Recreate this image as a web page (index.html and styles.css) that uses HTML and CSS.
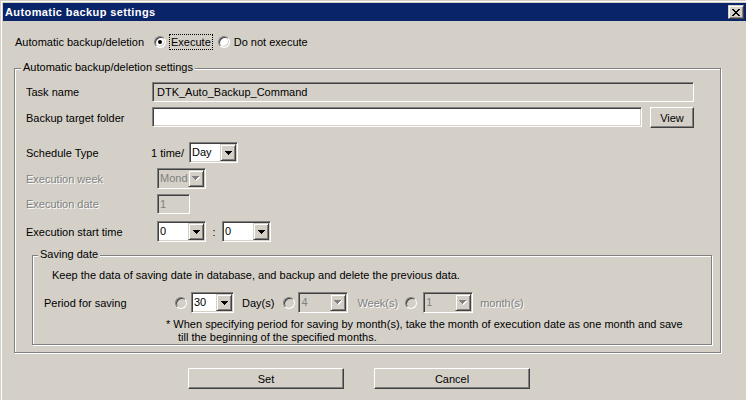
FILE: index.html
```html
<!DOCTYPE html>
<html>
<head>
<meta charset="utf-8">
<link rel="stylesheet" href="styles.css">
</head>
<body>
<div class="frame">
  <div class="titlebar">
    <span class="title">Automatic backup settings</span>
    <span class="close-btn"><svg width="8" height="7" viewBox="0 0 8 7" shape-rendering="crispEdges"><path d="M0 0h2v1h1v1h2v-1h1v-1h2v1h-1v1h-1v1h-1v1h1v1h1v1h1v1h-2v-1h-1v-1h-2v1h-1v1h-2v-1h1v-1h1v-1h1v-1h-1v-1h-1v-1h-1z" fill="#000"/></svg></span>
  </div>
  <div class="content">
    <div class="row-top">
      <span class="lbl-top">Automatic backup/deletion</span>
      <span class="radio checked"></span>
      <span class="focus">Execute</span>
      <span class="radio r-second"></span>
      <span class="opt-text">Do not execute</span>
    </div>

    <div class="group outer">
      <span class="legend">Automatic backup/deletion settings</span>

      <div class="frow r-task">
        <span class="flabel">Task name</span>
        <span class="input ro task">DTK_Auto_Backup_Command</span>
      </div>

      <div class="frow r-folder">
        <span class="flabel">Backup target folder</span>
        <span class="input folder"></span>
        <span class="btn view">View</span>
      </div>

      <div class="frow r-sched">
        <span class="flabel">Schedule Type</span>
        <span class="times">1 time/</span>
        <span class="select w49"><span class="val">Day</span><span class="arrow"><svg width="7" height="4" viewBox="0 0 7 4" shape-rendering="crispEdges"><path d="M0 0h7v1h-1v1h-1v1h-1v1h-1v-1h-1v-1h-1v-1h-1z" fill="#000"/></svg></span></span>
      </div>

      <div class="frow r-week">
        <span class="flabel disabled">Execution week</span>
        <span class="select w49 dis indent"><span class="val">Monday</span><span class="arrow"><svg width="8" height="5" viewBox="0 0 8 5" shape-rendering="crispEdges"><path d="M1 1h7v1h-1v1h-1v1h-1v1h-1v-1h-1v-1h-1v-1h-1z" fill="#fff"/><path d="M0 0h7v1h-1v1h-1v1h-1v1h-1v-1h-1v-1h-1v-1h-1z" fill="#808080"/></svg></span></span>
      </div>

      <div class="frow r-date">
        <span class="flabel disabled">Execution date</span>
        <span class="input ro date indent">1</span>
      </div>

      <div class="frow r-time">
        <span class="flabel">Execution start time</span>
        <span class="select w49 indent"><span class="val">0</span><span class="arrow"><svg width="7" height="4" viewBox="0 0 7 4" shape-rendering="crispEdges"><path d="M0 0h7v1h-1v1h-1v1h-1v1h-1v-1h-1v-1h-1v-1h-1z" fill="#000"/></svg></span></span>
        <span class="colon">:</span>
        <span class="select w49"><span class="val">0</span><span class="arrow"><svg width="7" height="4" viewBox="0 0 7 4" shape-rendering="crispEdges"><path d="M0 0h7v1h-1v1h-1v1h-1v1h-1v-1h-1v-1h-1v-1h-1z" fill="#000"/></svg></span></span>
      </div>

      <div class="group inner">
        <span class="legend">Saving date</span>
        <div class="keep">Keep the data of saving date in database, and backup and delete the previous data.</div>
        <div class="prow">
          <span class="plabel">Period for saving</span>
          <span class="radio grey"></span>
          <span class="select w43 m-s1"><span class="val">30</span><span class="arrow"><svg width="7" height="4" viewBox="0 0 7 4" shape-rendering="crispEdges"><path d="M0 0h7v1h-1v1h-1v1h-1v1h-1v-1h-1v-1h-1v-1h-1z" fill="#000"/></svg></span></span>
          <span class="unit u-day">Day(s)</span>
          <span class="radio grey m-r2"></span>
          <span class="select w50 dis m-s2"><span class="val">4</span><span class="arrow"><svg width="8" height="5" viewBox="0 0 8 5" shape-rendering="crispEdges"><path d="M1 1h7v1h-1v1h-1v1h-1v1h-1v-1h-1v-1h-1v-1h-1z" fill="#fff"/><path d="M0 0h7v1h-1v1h-1v1h-1v1h-1v-1h-1v-1h-1v-1h-1z" fill="#808080"/></svg></span></span>
          <span class="unit disabled u-week">Week(s)</span>
          <span class="radio grey m-r3"></span>
          <span class="select w50 dis m-s3"><span class="val">1</span><span class="arrow"><svg width="8" height="5" viewBox="0 0 8 5" shape-rendering="crispEdges"><path d="M1 1h7v1h-1v1h-1v1h-1v1h-1v-1h-1v-1h-1v-1h-1z" fill="#fff"/><path d="M0 0h7v1h-1v1h-1v1h-1v1h-1v-1h-1v-1h-1v-1h-1z" fill="#808080"/></svg></span></span>
          <span class="unit disabled u-month">month(s)</span>
        </div>
        <div class="note">* When specifying period for saving by month(s), take the month of execution date as one month and save<br>till the beginning of the specified months.</div>
      </div>
    </div>

    <div class="buttons">
      <span class="btn big">Set</span>
      <span class="btn big">Cancel</span>
    </div>
  </div>
</div>
</body>
</html>
```

FILE: styles.css
```css
html, body {
  margin: 0;
  padding: 0;
  background: #d4d0c8;
  overflow: hidden;
}
body {
  width: 746px;
  height: 400px;
  font-family: "Liberation Sans", Arial, sans-serif;
  font-size: 11px;
  letter-spacing: 0;
  color: #000;
}
.frame {
  margin: 1px 0 0 1px;
  border-left: 1px solid #fff;
  border-top: 1px solid #fff;
  padding: 1px 0 0 1px;
  height: 397px;
}
.titlebar {
  height: 18px;
  background: #0a246a;
  display: flex;
  align-items: center;
  justify-content: space-between;
  padding-left: 2px;
  padding-right: 0;
}
.title {
  color: #fff;
  font-weight: bold;
  letter-spacing: 0.4px;
  line-height: 18px;
}
.close-btn {
  width: 16px;
  height: 14px;
  box-sizing: border-box;
  background: #d4d0c8;
  border: 1px solid;
  border-color: #d4d0c8 #404040 #404040 #d4d0c8;
  box-shadow: inset 1px 1px 0 #fff, inset -1px -1px 0 #808080;
  display: flex;
  align-items: center;
  justify-content: center;
  margin-right: 2px;
}
.close-btn svg { display: block; }

.content {
  display: flex;
  flex-direction: column;
  align-items: flex-start;
}

.row-top {
  margin-top: 11px;
  height: 20px;
  padding-left: 12px;
  display: flex;
  align-items: center;
}
.lbl-top { width: 139px; }
.radio {
  width: 12px;
  height: 12px;
  box-sizing: border-box;
  border-radius: 50%;
  background: #fff;
  border: 1px solid;
  border-color: #808080 #fff #fff #808080;
  box-shadow: inset 1px 1px 0 #404040, inset -1px -1px 0 #d4d0c8;
  display: flex;
  align-items: center;
  justify-content: center;
  flex-shrink: 0;
}
.radio.checked::after {
  content: "";
  width: 4px;
  height: 4px;
  border-radius: 50%;
  background: #000;
}
.radio.grey { background: #d4d0c8; }
.focus {
  margin-left: 3px;
  border: 1px dotted #000;
  padding: 0 1px;
  line-height: 14px;
}
.r-second { margin-left: 5px; }
.opt-text { margin-left: 4px; }

.group {
  position: relative;
  box-sizing: border-box;
  border: 1px solid #808080;
  box-shadow: inset 1px 1px 0 #fff, 1px 1px 0 #fff;
}
.group .legend {
  position: absolute;
  top: -8px;
  background: #d4d0c8;
  padding: 0 2px;
  line-height: 13px;
  white-space: nowrap;
}
.outer {
  margin-left: 11px;
  margin-top: 16px;
  width: 707px;
  padding: 13px 0 7px 11px;
}
.outer > .legend { left: 6px; }

.frow {
  display: flex;
  align-items: flex-start;
}
.flabel {
  width: 126px;
  flex-shrink: 0;
  align-self: center;
}
.disabled {
  color: #808080;
  text-shadow: 1px 1px 0 #fff;
}
.r-task { height: 20px; }
.r-folder { margin-top: 5px; }
.r-sched { margin-top: 14px; }
.r-week { margin-top: 5px; }
.r-date { margin-top: 5px; }
.r-time { margin-top: 7px; }
.indent { margin-left: 5px; }

.input {
  box-sizing: border-box;
  height: 20px;
  border: 1px solid;
  border-color: #808080 #fff #fff #808080;
  box-shadow: inset 1px 1px 0 #404040, inset -1px -1px 0 #d4d0c8;
  background: #fff;
  padding: 0 4px;
  line-height: 18px;
  white-space: nowrap;
  overflow: hidden;
}
.input.ro { background: #d4d0c8; }
.task { width: 542px; }
.folder { width: 490px; }
.date { width: 33px; color: #808080; padding-left: 2px; }

.btn {
  box-sizing: border-box;
  background: #d4d0c8;
  border: 1px solid;
  border-color: #fff #404040 #404040 #fff;
  box-shadow: inset -1px -1px 0 #808080;
  display: flex;
  align-items: center;
  justify-content: center;
  height: 21px;
}
.view {
  width: 44px;
  margin-left: 8px;
}

.times {
  width: 38px;
  margin-left: -1px;
  align-self: center;
  white-space: nowrap;
}
.select {
  box-sizing: border-box;
  height: 21px;
  padding: 1px;
  border: 1px solid;
  border-color: #808080 #fff #fff #808080;
  box-shadow: inset 1px 1px 0 #404040, inset -1px -1px 0 #d4d0c8;
  background: #fff;
  display: flex;
  flex-shrink: 0;
}
.select .val {
  flex: 1;
  min-width: 0;
  padding-left: 1px;
  line-height: 17px;
  overflow: hidden;
  white-space: nowrap;
}
.select .arrow {
  width: 16px;
  height: 17px;
  box-sizing: border-box;
  background: #d4d0c8;
  border: 1px solid;
  border-color: #d4d0c8 #404040 #404040 #d4d0c8;
  box-shadow: inset 1px 1px 0 #fff, inset -1px -1px 0 #808080;
  display: flex;
  align-items: center;
  justify-content: center;
  flex-shrink: 0;
}
.select .arrow svg { display: block; }
.select.dis { background: #d4d0c8; }
.select.dis .val { color: #808080; }
.w49 { width: 49px; }
.w43 { width: 43px; }
.w50 { width: 50px; }
.colon {
  width: 16px;
  text-align: center;
  align-self: center;
}

.inner {
  margin-top: 13px;
  margin-left: 6px;
  width: 680px;
  padding: 13px 0 0 11px;
}
.inner > .legend { left: 5px; }
.keep {
  margin-left: 8px;
  line-height: 13px;
}
.prow {
  margin-top: 10px;
  height: 21px;
  display: flex;
  align-items: center;
}
.plabel { width: 131px; flex-shrink: 0; }
.m-s1 { margin-left: 4px; }
.u-day { margin-left: 8px; }
.m-r2 { margin-left: 9px; }
.m-s2 { margin-left: 3px; }
.u-week { margin-left: 9px; }
.m-r3 { margin-left: 7px; }
.m-s3 { margin-left: 6px; }
.u-month { margin-left: 7px; }
.note {
  margin-top: 5px;
  margin-left: 122px;
  padding-left: 12px;
  text-indent: -12px;
  line-height: 13px;
  white-space: nowrap;
}

.buttons {
  margin-top: 15px;
  padding-left: 185px;
  display: flex;
  gap: 30px;
}
.big { width: 156px; }
```
